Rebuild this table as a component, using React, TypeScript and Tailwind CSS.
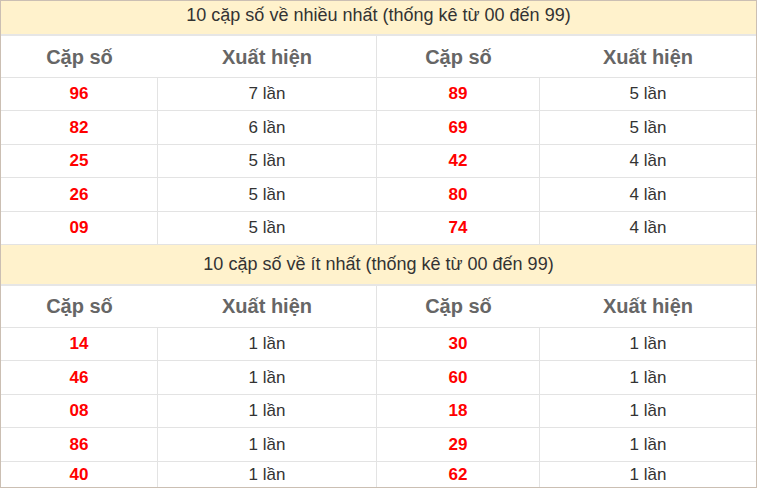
const topPairs = [
  ['96', '7 lần', '89', '5 lần'],
  ['82', '6 lần', '69', '5 lần'],
  ['25', '5 lần', '42', '4 lần'],
  ['26', '5 lần', '80', '4 lần'],
  ['09', '5 lần', '74', '4 lần'],
];

const bottomPairs = [
  ['14', '1 lần', '30', '1 lần'],
  ['46', '1 lần', '60', '1 lần'],
  ['08', '1 lần', '18', '1 lần'],
  ['86', '1 lần', '29', '1 lần'],
  ['40', '1 lần', '62', '1 lần'],
];

function Block({ title, rows, titleClass, last }: { title: string; rows: string[][]; titleClass: string; last?: boolean }) {
  return (
    <div className={last ? 'flex flex-col flex-1' : 'flex flex-col'}>
      <div className={`${titleClass} bg-[#fff2cc] border-b-2 border-[#e6e6e6] flex items-center justify-center text-[18px] text-[#333]`}>
        {title}
      </div>
      <div className="grid grid-cols-[157px_219px_163px_1fr] h-[42px] border-b border-[#e3e3e3] text-[20px] font-bold text-[#666]">
        <div className="flex items-center justify-center">Cặp số</div>
        <div className="flex items-center justify-center border-r border-[#e3e3e3]">Xuất hiện</div>
        <div className="flex items-center justify-center">Cặp số</div>
        <div className="flex items-center justify-center">Xuất hiện</div>
      </div>
      <div className={last ? 'flex flex-col flex-1' : 'flex flex-col'}>
        {rows.map((r, i) => {
          const isLast = last && i === rows.length - 1;
          return (
            <div
              key={i}
              className={`grid grid-cols-[157px_219px_163px_1fr] text-[17px] ${isLast ? 'flex-1' : 'h-[33.4px] border-b border-[#e3e3e3]'}`}
            >
              <div className="flex items-center justify-center border-r border-[#e3e3e3] font-bold text-[#ff0000]">{r[0]}</div>
              <div className="flex items-center justify-center border-r border-[#e3e3e3] text-[#333]">{r[1]}</div>
              <div className="flex items-center justify-center border-r border-[#e3e3e3] font-bold text-[#ff0000]">{r[2]}</div>
              <div className="flex items-center justify-center text-[#333]">{r[3]}</div>
            </div>
          );
        })}
      </div>
    </div>
  );
}

export default function App() {
  return (
    <div
      className="w-[757px] h-[488px] bg-white border border-[#cbbfb3] flex flex-col overflow-hidden"
      style={{ fontFamily: '"Liberation Sans", Arial, sans-serif' }}
    >
      <Block title="10 cặp số về nhiều nhất (thống kê từ 00 đến 99)" rows={topPairs} titleClass="h-[35px] pb-1" />
      <Block title="10 cặp số về ít nhất (thống kê từ 00 đến 99)" rows={bottomPairs} titleClass="h-[41px]" last />
    </div>
  );
}
